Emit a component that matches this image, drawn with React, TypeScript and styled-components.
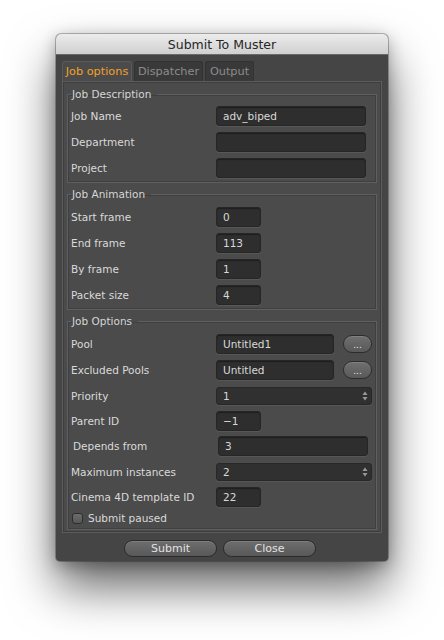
import React from "react";
import styled, { createGlobalStyle } from "styled-components";

const Global = createGlobalStyle`
  html, body { margin: 0; padding: 0; background: #ffffff; }
  body { font-family: "DejaVu Sans", "Liberation Sans", sans-serif; }
  * { box-sizing: border-box; }
`;

const Page = styled.div`
  width: 444px;
  height: 640px;
  padding: 34px 0 0 56px;
`;

const Window = styled.div`
  width: 332px;
  height: 527px;
  background: #454545;
  border-radius: 5px 5px 4px 4px;
  box-shadow: 0 26px 48px rgba(0, 0, 0, 0.6), 0 0 0 1px rgba(0, 0, 0, 0.25),
    0 4px 16px rgba(0, 0, 0, 0.3);
  display: flex;
  flex-direction: column;
  overflow: hidden;
`;

const TitleBar = styled.div`
  height: 21px;
  background: linear-gradient(#ececec, #d0d0d0);
  border-bottom: 1px solid #6a6a6a;
  display: flex;
  align-items: center;
  justify-content: center;
  font-size: 12.5px;
  color: #262626;
  flex-shrink: 0;
`;

const Body = styled.div`
  padding: 6px 6px 0 6px;
  display: flex;
  flex-direction: column;
`;

const TabRow = styled.div`
  display: flex;
  gap: 2px;
  height: 20px;
`;

const Tab = styled.div<{ $active?: boolean; $w: number }>`
  width: ${(p) => p.$w}px;
  height: 20px;
  border-radius: 3px 3px 0 0;
  background: ${(p) => (p.$active ? "#4b4b4b" : "#393939")};
  border: 1px solid ${(p) => (p.$active ? "#5a5a5a" : "#333333")};
  border-bottom: none;
  color: ${(p) => (p.$active ? "#f3a12a" : "#8c8c8c")};
  font-size: 11.3px;
  display: flex;
  align-items: center;
  justify-content: center;
  margin-bottom: ${(p) => (p.$active ? "-1px" : "0")};
  position: relative;
  z-index: ${(p) => (p.$active ? 1 : 0)};
`;

const Panel = styled.div`
  width: 320px;
  height: 452px;
  background: #4b4b4b;
  border: 1px solid #5c5c5c;
  box-shadow: inset 0 0 0 1px #3e3e3e;
  padding: 6px 4px 0 4px;
  display: flex;
  flex-direction: column;
  gap: 5px;
`;

const Group = styled.fieldset<{ $pb: number }>`
  margin: 0;
  border: 1px solid #5f5f5f;
  box-shadow: inset 0 0 0 1px #3f3f3f;
  padding: 0 0 ${(p) => p.$pb}px 3px;
  display: flex;
  flex-direction: column;
`;

const Legend = styled.legend`
  font-size: 10.5px;
  color: #d6d6d6;
  padding: 0 6px 0 1px;
  margin-left: 0;
  line-height: 13px;
`;

const Rows = styled.div<{ $pt: number }>`
  display: flex;
  flex-direction: column;
  padding-top: ${(p) => p.$pt}px;
`;

const Row = styled.div<{ $h?: number }>`
  height: ${(p) => p.$h ?? 26}px;
  display: flex;
  align-items: center;
`;

const Label = styled.div<{ $indent?: number }>`
  width: 145px;
  padding-left: ${(p) => p.$indent ?? 0}px;
  font-size: 10.5px;
  color: #dadada;
  white-space: nowrap;
  flex-shrink: 0;
`;

const Field = styled.div<{ $w: number; $ml?: number }>`
  width: ${(p) => p.$w}px;
  height: 20px;
  margin-left: ${(p) => p.$ml ?? 0}px;
  background: #2e2e2e;
  border-radius: 3px;
  border: 1px solid #262626;
  box-shadow: 0 1px 0 #575757, inset 0 1px 1px rgba(0, 0, 0, 0.35);
  font-size: 10.5px;
  color: #d8d8d8;
  padding-left: 6px;
  display: flex;
  align-items: center;
`;

const Select = styled.div`
  width: 156px;
  height: 18px;
  background: #303030;
  border-radius: 3px;
  border: 1px solid #282828;
  box-shadow: 0 1px 0 #565656;
  font-size: 10.5px;
  color: #d8d8d8;
  padding: 0 3px 0 6px;
  display: flex;
  align-items: center;
  justify-content: space-between;
`;

const Dots = styled.div`
  width: 29px;
  height: 18px;
  margin-left: 9px;
  border-radius: 9px;
  background: linear-gradient(#707070, #595959);
  border: 1px solid #2c2c2c;
  box-shadow: inset 0 1px 0 #808080;
  color: #e6e6e6;
  font-size: 9px;
  display: flex;
  align-items: center;
  justify-content: center;
  line-height: 1;
  padding-top: 2px;
`;

const CheckRow = styled.div`
  height: 18px;
  display: flex;
  align-items: center;
  gap: 5px;
  padding-left: 1px;
  font-size: 10.5px;
  color: #dadada;
`;

const Box = styled.div`
  width: 11px;
  height: 11px;
  border-radius: 3px;
  background: linear-gradient(#6c6c6c, #565656);
  border: 1px solid #2e2e2e;
`;

const Footer = styled.div`
  display: flex;
  justify-content: center;
  gap: 6px;
  padding-top: 7px;
  padding-right: 4px;
`;

const Button = styled.div`
  width: 93px;
  height: 17px;
  border-radius: 9px;
  background: linear-gradient(#6e6e6e, #585858);
  border: 1px solid #2a2a2a;
  box-shadow: inset 0 1px 0 #7e7e7e;
  color: #e2e2e2;
  font-size: 11px;
  display: flex;
  align-items: center;
  justify-content: center;
`;

const Arrows = () => (
  <svg width="6" height="10" viewBox="0 0 6 10">
    <path d="M3 0.5 L5.5 4 L0.5 4 Z" fill="#9a9a9a" />
    <path d="M3 9.5 L5.5 6 L0.5 6 Z" fill="#9a9a9a" />
  </svg>
);

export default function App() {
  return (
    <>
      <Global />
      <Page>
        <Window>
          <TitleBar>Submit To Muster</TitleBar>
          <Body>
            <TabRow>
              <Tab $active $w={70}>Job options</Tab>
              <Tab $w={69}>Dispatcher</Tab>
              <Tab $w={49}>Output</Tab>
            </TabRow>
            <Panel>
              <Group $pb={1}>
                <Legend>Job Description</Legend>
                <Rows $pt={2}>
                  <Row><Label>Job Name</Label><Field $w={150}>adv_biped</Field></Row>
                  <Row><Label>Department</Label><Field $w={150} /></Row>
                  <Row><Label>Project</Label><Field $w={150} /></Row>
                </Rows>
              </Group>
              <Group $pb={1}>
                <Legend>Job Animation</Legend>
                <Rows $pt={3}>
                  <Row><Label>Start frame</Label><Field $w={45}>0</Field></Row>
                  <Row><Label>End frame</Label><Field $w={45}>113</Field></Row>
                  <Row><Label>By frame</Label><Field $w={45}>1</Field></Row>
                  <Row><Label>Packet size</Label><Field $w={45}>4</Field></Row>
                </Rows>
              </Group>
              <Group $pb={2}>
                <Legend>Job Options</Legend>
                <Rows $pt={3}>
                  <Row><Label>Pool</Label><Field $w={118}>Untitled1</Field><Dots>...</Dots></Row>
                  <Row><Label>Excluded Pools</Label><Field $w={118}>Untitled</Field><Dots>...</Dots></Row>
                  <Row $h={25}><Label>Priority</Label><Select>1<Arrows /></Select></Row>
                  <Row $h={25}><Label>Parent ID</Label><Field $w={45}>−1</Field></Row>
                  <Row><Label $indent={2}>Depends from</Label><Field $w={150} $ml={2}>3</Field></Row>
                  <Row $h={25}><Label>Maximum instances</Label><Select>2<Arrows /></Select></Row>
                  <Row $h={25}><Label>Cinema 4D template ID</Label><Field $w={45}>22</Field></Row>
                  <CheckRow><Box />Submit paused</CheckRow>
                </Rows>
              </Group>
            </Panel>
            <Footer>
              <Button>Submit</Button>
              <Button>Close</Button>
            </Footer>
          </Body>
        </Window>
      </Page>
    </>
  );
}
